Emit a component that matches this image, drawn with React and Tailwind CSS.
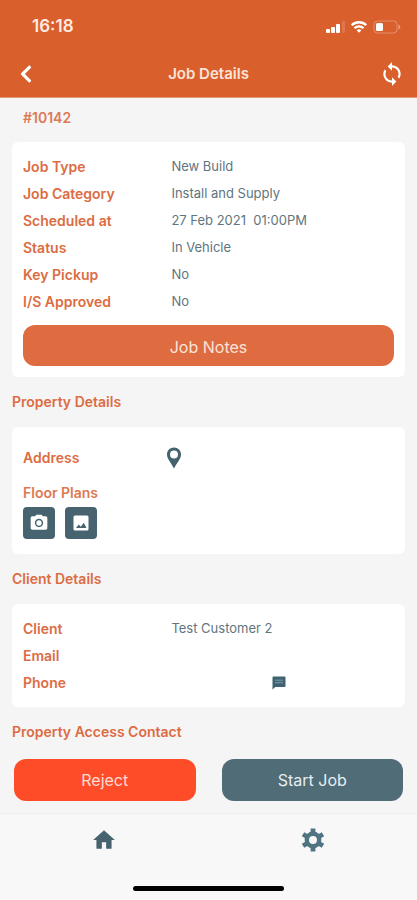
import React from 'react';
import { FaChevronLeft } from 'react-icons/fa';
import { MdSync, MdPhotoCamera, MdHome } from 'react-icons/md';

const jobRows = [
    { label: 'Job Type', value: 'New Build' },
    { label: 'Job Category', value: 'Install and Supply' },
    { label: 'Scheduled at', value: '27 Feb 2021  01:00PM' },
    { label: 'Status', value: 'In Vehicle' },
    { label: 'Key Pickup', value: 'No' },
    { label: 'I/S Approved', value: 'No' }
];

const StatusIcons = () => (
    <div className="flex items-center gap-1.5">
        <svg className="w-5 h-3" viewBox="0 0 20 12" fill="#fff">
            <rect x="1" y="8" width="4" height="4" rx="1" />
            <rect x="6" y="6" width="4" height="6" rx="1" />
            <rect x="11" y="3" width="4" height="9" rx="1" />
            <rect x="17" y="0" width="3" height="12" rx="1" opacity="0.15" />
        </svg>
        <svg className="w-4 h-3" viewBox="0 0 16 12" fill="none" stroke="#fff" strokeWidth="2.300">
            <path d="M0.800 4.200a10.300 10.300 0 0 1 14.400 0" />
            <path d="M3.500 7.200a6.400 6.400 0 0 1 9 0" />
            <path d="M8 11.800 5.600 9.300a3.500 3.500 0 0 1 4.800 0z" fill="#fff" stroke="none" />
        </svg>
        <svg className="w-7 h-3.5" viewBox="0 0 28 14">
            <rect x="1" y="1" width="23" height="12" rx="3.500" fill="none" stroke="#fff" strokeOpacity="0.3" />
            <rect x="3" y="3" width="7" height="8" rx="1.500" fill="#fff" />
            <path d="M25.500 4.500v5c1.200-.5 1.800-1.500 1.800-2.500s-.6-2-1.800-2.500z" fill="#fff" opacity="0.4" />
        </svg>
    </div>
);

const PinIcon = () => (
    <svg className="w-4 h-[22px]" viewBox="0 0 16 22" fill="#44636f">
        <path
            fillRule="evenodd"
            d="M8 0.500C3.900 0.500 1 3.600 1 7.500C1 12 5.500 16.500 8 21.500C10.500 16.500 15 12 15 7.500C15 3.600 12.100 0.500 8 0.500ZM8 3.500a4 4 0 1 1 0 8a4 4 0 0 1 0-8Z"
        />
    </svg>
);

const PictureIcon = () => (
    <svg className="w-4 h-4" viewBox="0 0 16 16">
        <rect x="0.500" y="0.500" width="15" height="15" rx="1.500" fill="#fff" />
        <path d="M3 13l2.800-3.500 2 2.200 3-4 2.700 5.300z" fill="#46636f" />
    </svg>
);

const MessageIcon = () => (
    <svg className="w-3.5 h-3.5" viewBox="0 0 14 14">
        <path d="M1.500 0.500h11a1 1 0 0 1 1 1v8.500a1 1 0 0 1-1 1H3.300L0.500 13.500v-12a1 1 0 0 1 1-1z" fill="#3f6272" />
        <path d="M3 4.200h8M3 6.700h8" stroke="#7f9caa" strokeWidth="1" />
    </svg>
);

const GearIcon = () => (
    <svg className="w-6 h-6" viewBox="0 0 24 24" fill="none" stroke="#4f7482">
        <circle cx="12" cy="12" r="6.200" strokeWidth="4.400" />
        <path
            d="M12 6V0.500M12 18v5.500M6.800 9 2.040 6.250M17.200 15l4.760 2.750M6.800 15l-4.760 2.750M17.200 9l4.760-2.750"
            strokeWidth="4.800"
        />
    </svg>
);

const Row = ({ label, children }) => (
    <div className="flex items-center h-[27px]">
        <dt className="w-2/5 text-sm font-semibold text-[#dc6c43]">{label}</dt>
        <dd className="flex-1 whitespace-pre text-[#5f757e]">{children}</dd>
    </div>
);

const SectionTitle = ({ children }) => (
    <h2 className="px-3 h-[50px] flex items-center text-sm font-semibold text-[#dc6c43]">{children}</h2>
);

const App = () => {
    return (
        <div className="min-h-screen flex flex-col bg-[#f5f5f5] font-['Inter',sans-serif] text-[13px]">
            <header className="bg-[#d9602c] text-white border-b border-[#e39a7a]">
                <div className="h-[50px] flex items-center justify-between pl-8 pr-4 pt-1">
                    <span className="text-[17px] font-semibold text-[#fdeae2]">16:18</span>
                    <StatusIcons />
                </div>
                <div className="h-[47px] grid grid-cols-3 items-center px-3">
                    <button type="button" aria-label="Back" className="justify-self-start px-1">
                        <FaChevronLeft className="w-5 h-5" />
                    </button>
                    <h1 className="pt-0.5 text-center text-[15px] font-semibold text-[#fbe3d9] whitespace-nowrap">Job Details</h1>
                    <button type="button" aria-label="Refresh" className="justify-self-end">
                        <MdSync className="w-[26px] h-[26px]" />
                    </button>
                </div>
            </header>

            <main className="flex-1">
                <p className="h-11 px-[23px] pt-2.5 text-sm font-semibold text-[#dc7a57]">#10142</p>

                <section className="mx-3 px-[11px] pt-[11px] pb-[11px] bg-white rounded-md">
                    <dl>
                        {jobRows.map((row) => (
                            <Row key={row.label} label={row.label}>{row.value}</Row>
                        ))}
                    </dl>
                    <button type="button" className="mt-2.5 pt-0.5 w-full h-[41px] rounded-xl bg-[#de6c40] text-[#fbe3d9] text-base">
                        Job Notes
                    </button>
                </section>

                <SectionTitle>Property Details</SectionTitle>
                <section className="mx-3 px-[11px] pt-[17px] pb-[15px] bg-white rounded-md">
                    <div className="flex items-center h-[27px] font-semibold text-[#dc6c43]">
                        <h3 className="w-[143px] text-sm">Address</h3>
                        <button type="button" aria-label="Show on map">
                            <PinIcon />
                        </button>
                    </div>
                    <h3 className="mt-3 pb-1 text-sm font-semibold text-[#de7852]">Floor Plans</h3>
                    <div className="flex gap-2.5">
                        <button type="button" aria-label="Take photo" className="w-8 h-8 flex items-center justify-center rounded bg-[#46636f] text-white">
                            <MdPhotoCamera className="w-5 h-5" />
                        </button>
                        <button type="button" aria-label="Choose image" className="w-8 h-8 flex items-center justify-center rounded bg-[#46636f] text-white">
                            <PictureIcon />
                        </button>
                    </div>
                </section>

                <SectionTitle>Client Details</SectionTitle>
                <section className="mx-3 px-[11px] py-[11px] bg-white rounded-md">
                    <dl>
                        <Row label="Client">Test Customer 2</Row>
                        <Row label="Email" />
                        <Row label="Phone">
                            <button type="button" aria-label="Send message" className="block ml-[45%]">
                                <MessageIcon />
                            </button>
                        </Row>
                    </dl>
                </section>

                <SectionTitle>Property Access Contact</SectionTitle>
            </main>

            <div className="flex gap-[26px] px-3.5 pb-3 text-base">
                <button type="button" className="flex-1 h-[42px] rounded-xl bg-[#fe4c29] text-[#ffdcd3]">Reject</button>
                <button type="button" className="flex-1 h-[42px] rounded-xl bg-[#4f6c77] text-[#e6eef1]">Start Job</button>
            </div>

            <footer className="bg-[#f8f8f8] border-t border-[#eeeeee]">
                <nav className="grid grid-cols-2 h-[52px]">
                    <a href="#home" aria-label="Home" className="flex items-center justify-center text-[#46636f]">
                        <MdHome className="w-[26px] h-[26px]" />
                    </a>
                    <a href="#settings" aria-label="Settings" className="flex items-center justify-center">
                        <GearIcon />
                    </a>
                </nav>
                <div className="h-[34px] pt-5">
                    <div className="mx-auto w-[36%] h-[5px] rounded-full bg-black" />
                </div>
            </footer>
        </div>
    );
};

export default App;
